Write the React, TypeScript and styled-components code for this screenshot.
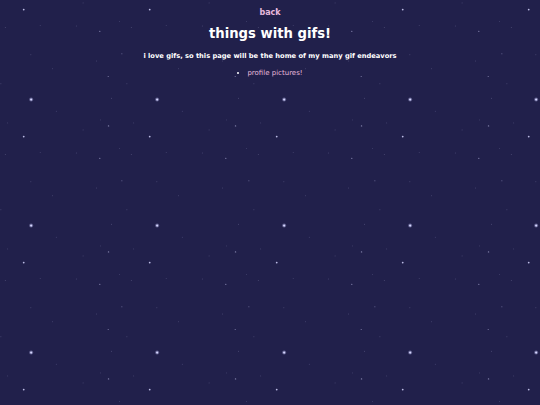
import React from "react";
import styled, { createGlobalStyle } from "styled-components";

// Star field tile: offsets are measured from the big star in each tile.
const TILE_W = 126.4;
const TILE_H = 126.7;
const ORIGIN = { x: 31, y: 99.3 };

type Star = [number, number, number, number]; // dx, dy, radius, opacity

const STARS: Star[] = [
  [0, 0, 1.1, 1],
  [119, 37, 0.9, 0.85],
  [81, -1.3, 0.45, 0.35],
  [25, 11.7, 0.45, 0.3],
  [69, 20.3, 0.45, 0.3],
  [78, 26.3, 0.7, 0.55],
  [103, 23.3, 0.45, 0.35],
  [51.7, 30.3, 0.45, 0.35],
  [89, 48.7, 0.45, 0.35],
  [100.7, 55, 0.45, 0.4],
  [9, 53, 0.45, 0.35],
  [45, 53.3, 0.45, 0.3],
  [68.3, 58.7, 0.7, 0.5],
  [-0.3, 82, 0.45, 0.3],
  [91.3, 81, 0.5, 0.45],
  [65, 88.3, 0.45, 0.3],
  [21.3, 96, 0.45, 0.3],
  [77.7, 103.7, 0.6, 0.5],
  [96.3, 111, 0.45, 0.3],
];

const mod = (v: number, m: number) => ((v % m) + m) % m;

const starTile = (() => {
  const dots = STARS.map(([dx, dy, r, o]) => {
    const cx = mod(ORIGIN.x + dx, TILE_W).toFixed(2);
    const cy = mod(ORIGIN.y + dy, TILE_H).toFixed(2);
    const glow =
      r > 1
        ? `<circle cx='${cx}' cy='${cy}' r='2' fill='%23c8c8ff' fill-opacity='0.35'/>`
        : "";
    return `${glow}<circle cx='${cx}' cy='${cy}' r='${r}' fill='%23d6d6ff' fill-opacity='${o}'/>`;
  }).join("");
  return `url("data:image/svg+xml,<svg xmlns='http://www.w3.org/2000/svg' width='${TILE_W}' height='${TILE_H}' viewBox='0 0 ${TILE_W} ${TILE_H}'>${dots}</svg>")`;
})();

const GlobalStyle = createGlobalStyle`
  html, body {
    margin: 0;
    padding: 0;
    min-height: 100%;
  }
  body {
    background-color: #21204b;
    background-image: ${starTile};
    background-size: ${TILE_W}px ${TILE_H}px;
    background-repeat: repeat;
    font-family: "DejaVu Sans", Verdana, sans-serif;
    color: #ffffff;
  }
`;

const Page = styled.main`
  min-height: 405px;
  display: flex;
  flex-direction: column;
  align-items: center;
  text-align: center;
  padding-top: 8px;
`;

const BackLink = styled.a`
  font-size: 8px;
  font-weight: bold;
  color: #e6b9dc;
  text-decoration: none;
  line-height: 10px;
`;

const Title = styled.h1`
  margin: 8px 0 0;
  font-size: 13.2px;
  line-height: 16px;
  font-weight: bold;
`;

const Intro = styled.p`
  margin: 9px 0 0;
  font-size: 6.7px;
  line-height: 10px;
  font-weight: bold;
`;

const Links = styled.ul`
  margin: 7px 0 0;
  padding: 0;
  list-style: disc inside;
  font-size: 7px;
  line-height: 10px;
`;

const LinkItem = styled.li`
  color: #ffffff;
`;

const ItemLink = styled.a`
  color: #e6b9dc;
  text-decoration: none;
`;

export default function App() {
  return (
    <>
      <GlobalStyle />
      <Page>
        <BackLink href="#">back</BackLink>
        <Title>things with gifs!</Title>
        <Intro>i love gifs, so this page will be the home of my many gif endeavors</Intro>
        <Links>
          <LinkItem>
            <ItemLink href="#">profile pictures!</ItemLink>
          </LinkItem>
        </Links>
      </Page>
    </>
  );
}
